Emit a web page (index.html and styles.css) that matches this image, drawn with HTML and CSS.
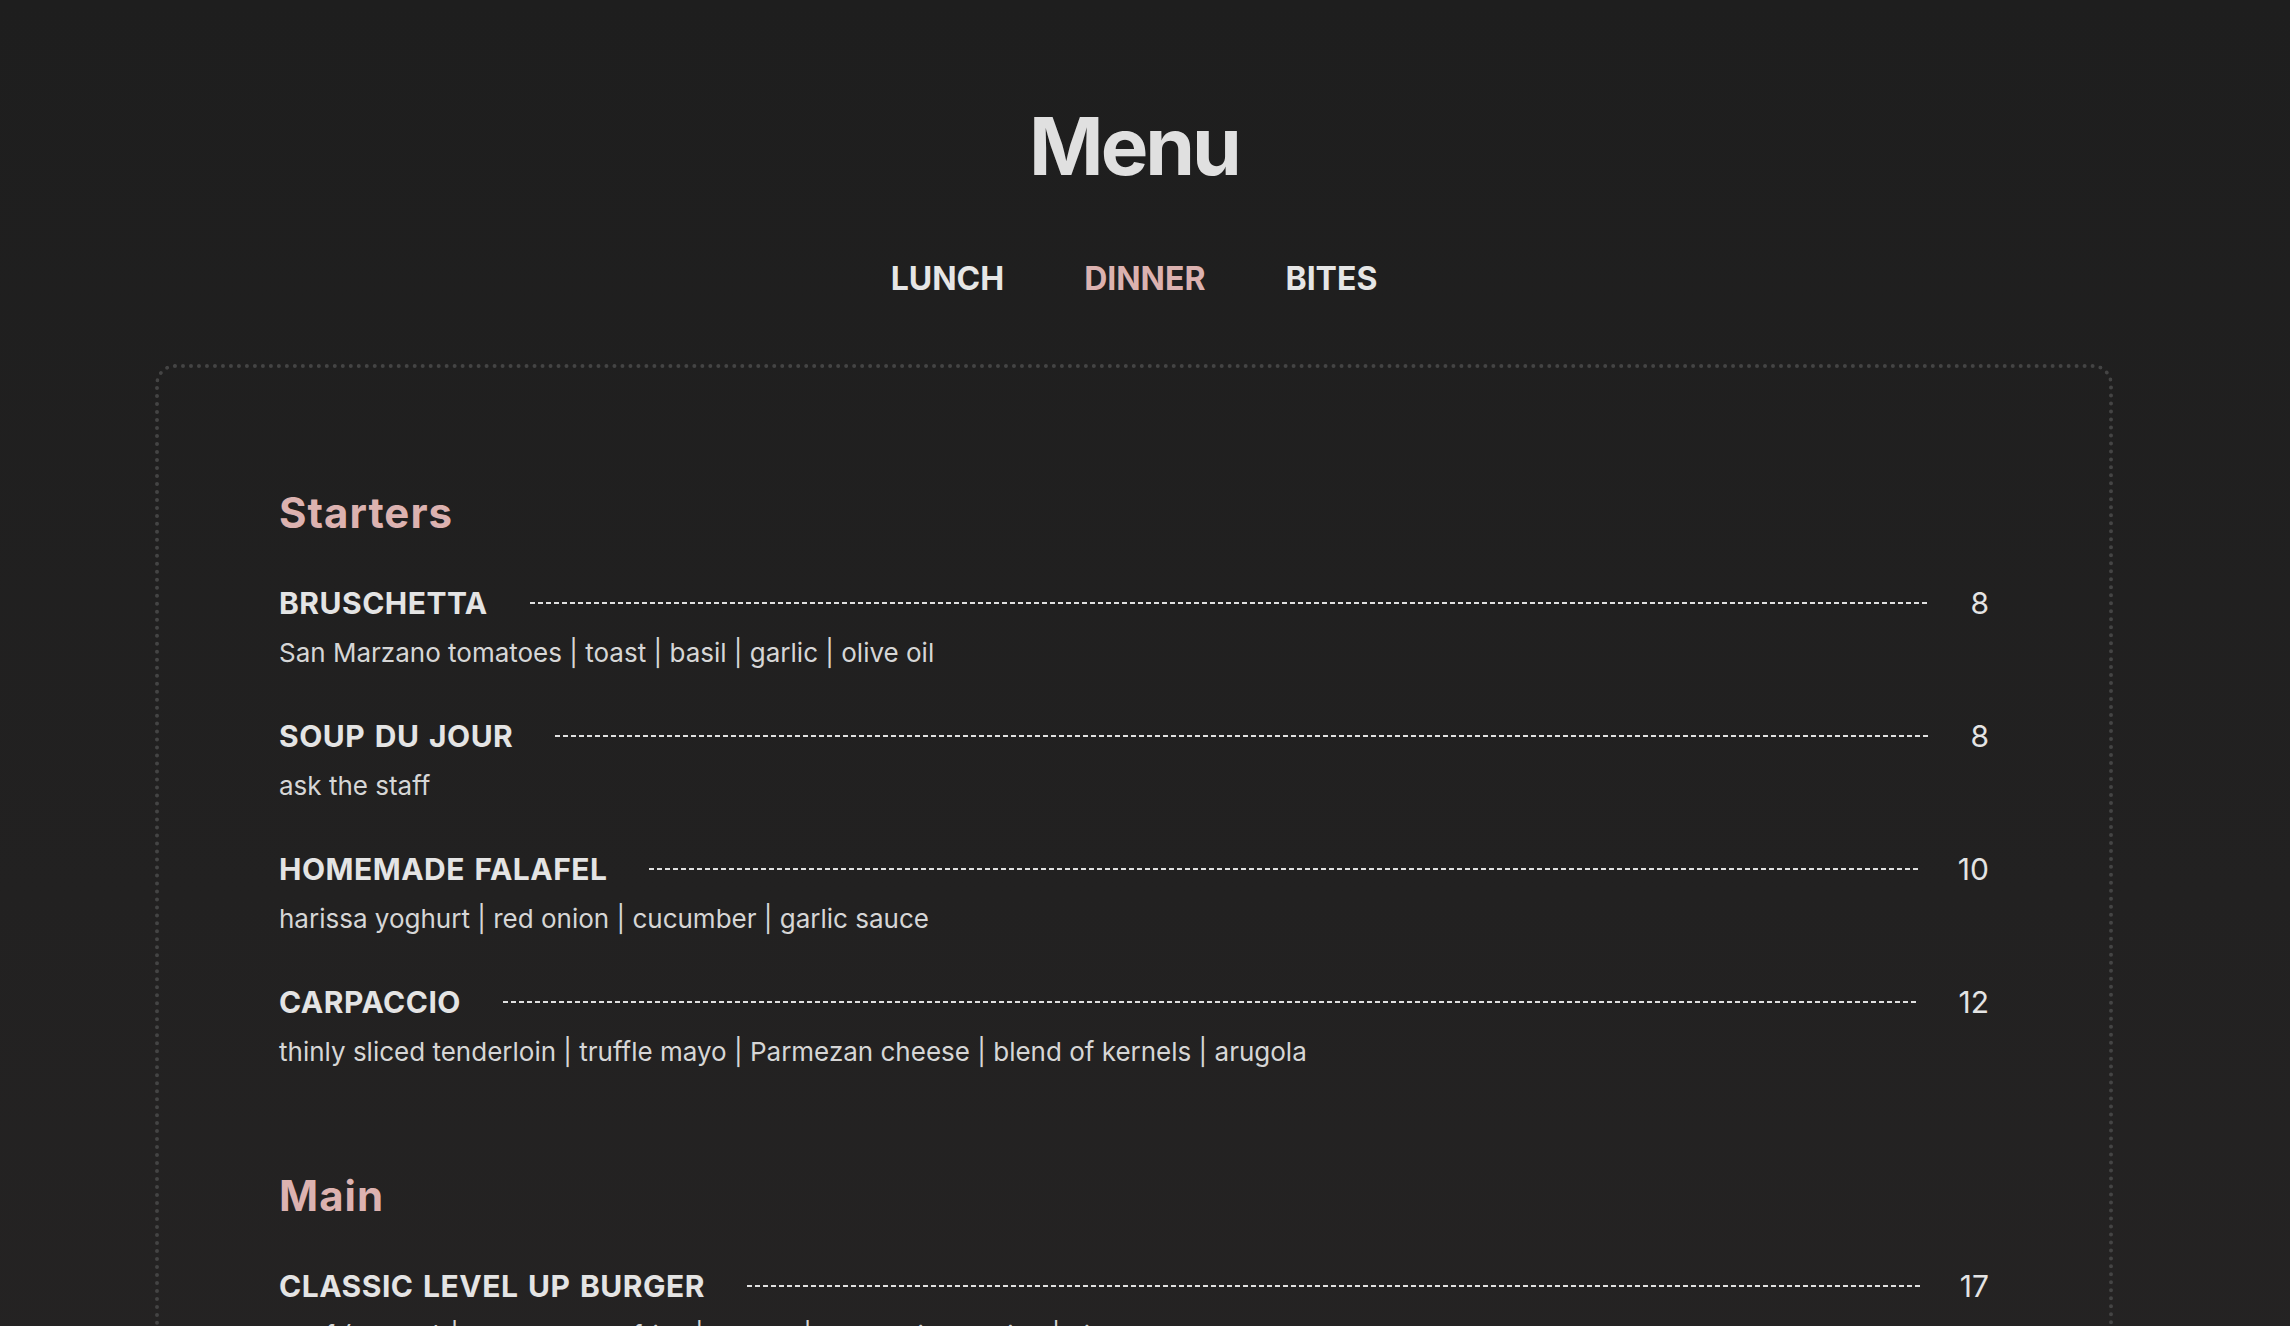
FILE: index.html
```html
<!DOCTYPE html>
<html>
<head>
    <title>Menu</title>
    <link rel="stylesheet" href="styles.css">
</head>
<body>
    <h1 class="title">Menu</h1>

    <nav class="tabs">
        <a href="#" class="tab">LUNCH</a>
        <a href="#" class="tab active">DINNER</a>
        <a href="#" class="tab">BITES</a>
    </nav>

    <div class="card">
        <section class="section">
            <h2 class="section-title">Starters</h2>

            <div class="item">
                <div class="item-row">
                    <span class="item-name">BRUSCHETTA</span>
                    <span class="dots"></span>
                    <span class="item-price">8</span>
                </div>
                <p class="item-desc">San Marzano tomatoes | toast | basil | garlic | olive oil</p>
            </div>

            <div class="item">
                <div class="item-row">
                    <span class="item-name">SOUP DU JOUR</span>
                    <span class="dots"></span>
                    <span class="item-price">8</span>
                </div>
                <p class="item-desc">ask the staff</p>
            </div>

            <div class="item">
                <div class="item-row">
                    <span class="item-name">HOMEMADE FALAFEL</span>
                    <span class="dots"></span>
                    <span class="item-price">10</span>
                </div>
                <p class="item-desc">harissa yoghurt | red onion | cucumber | garlic sauce</p>
            </div>

            <div class="item">
                <div class="item-row">
                    <span class="item-name">CARPACCIO</span>
                    <span class="dots"></span>
                    <span class="item-price">12</span>
                </div>
                <p class="item-desc">thinly sliced tenderloin | truffle mayo | Parmezan cheese | blend of kernels | arugola</p>
            </div>
        </section>

        <section class="section">
            <h2 class="section-title">Main</h2>

            <div class="item">
                <div class="item-row">
                    <span class="item-name">CLASSIC LEVEL UP BURGER</span>
                    <span class="dots"></span>
                    <span class="item-price">17</span>
                </div>
                <p class="item-desc">beef (200 gr) | sweet potato fries | tomato | caramelized onion | pickles</p>
            </div>

            <div class="item">
                <div class="item-row">
                    <span class="item-name">CHICKEN SATAY</span>
                    <span class="dots"></span>
                    <span class="item-price">16</span>
                </div>
                <p class="item-desc">peanut sauce | rice | cucumber salad | prawn crackers</p>
            </div>
        </section>
    </div>
</body>
</html>
```

FILE: styles.css
```css
body {
    margin: 0;
    padding: 106px 22px 80px 0;
    font-family: Inter, Lato, sans-serif;
    background: linear-gradient(180deg, #1e1e1e 0%, #222121 55%, #262424 100%);
    background-color: #1f1f1f;
    color: #e2e2e2;
    min-height: 100vh;
}

.title {
    margin: 0;
    font-size: 80px;
    line-height: 1;
    font-weight: 700;
    letter-spacing: -3px;
    text-align: center;
    color: #e0e0e0;
}

.tabs {
    display: flex;
    justify-content: center;
    gap: 80px;
    margin-top: 77px;
}

.tab {
    font-size: 32px;
    line-height: 1;
    font-weight: 700;
    color: #e6e6e6;
    text-decoration: none;
}

.tab.active {
    color: #dcb2b0;
}

.card {
    margin: 69px 155px 0;
    padding: 124px 120px 60px;
    border: 4px dotted #444;
    border-radius: 20px;
}

.section + .section {
    margin-top: 110px;
}

.section-title {
    margin: 0 0 54px;
    font-size: 42px;
    line-height: 1;
    font-weight: 700;
    letter-spacing: 1px;
    color: #dcb2b0;
}

.item + .item {
    margin-top: 55px;
}

.item-row {
    display: flex;
    align-items: center;
    height: 30px;
}

.item-name {
    font-size: 30px;
    line-height: 1;
    font-weight: 700;
    letter-spacing: 0.5px;
    word-spacing: 2px;
    color: #e4e4e4;
}

.dots {
    flex: 1;
    height: 2px;
    margin: 0 40px 0 42px;
    background: repeating-linear-gradient(90deg, #e0e0e0 0 5px, transparent 5px 8px);
}

.item-price {
    font-size: 30px;
    line-height: 1;
    color: #e4e4e4;
}

.item-desc {
    margin: 22px 0 0;
    font-size: 26px;
    line-height: 1;
    color: #d6d6d6;
}
```
